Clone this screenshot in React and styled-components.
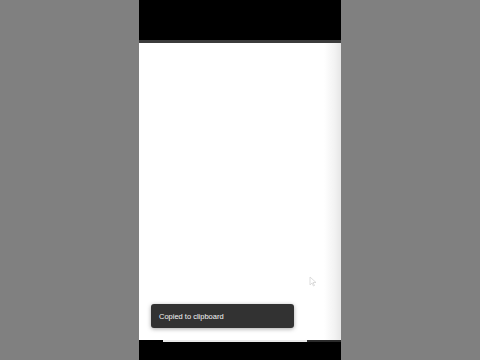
import React from "react";
import styled, { createGlobalStyle } from "styled-components";

const Global = createGlobalStyle`
  html, body { margin: 0; padding: 0; width: 480px; height: 360px; overflow: hidden; background: #808080; }
  * { box-sizing: border-box; }
`;

const Stage = styled.div`
  width: 480px;
  height: 360px;
  display: flex;
  justify-content: flex-start;
  background: #808080;
  font-family: "Liberation Sans", Arial, sans-serif;
`;

const Side = styled.div`
  width: ${(p) => p.$w}px;
  height: 100%;
  background: #808080;
  flex: none;
`;

const Phone = styled.div`
  width: 202px;
  height: 100%;
  display: flex;
  flex-direction: column;
  background: #000;
  position: relative;
  flex: none;
`;

const TopBlack = styled.div`
  height: 40px;
  background: #000;
  flex: none;
`;

const TopLine = styled.div`
  height: 3px;
  background: #3c3c3c;
  flex: none;
`;

const Screen = styled.div`
  flex: 1;
  background: linear-gradient(to right, #ffffff 0, #ffffff 185px, #f2f2f2 196px, #e6e6e6 202px);
  position: relative;
`;

const Bottom = styled.div`
  height: 20px;
  background: #000;
  display: flex;
  flex: none;
`;

const BottomBar = styled.div`
  height: 2px;
  margin-left: 24px;
  width: 144px;
  background: #e8e8e8;
`;

const BottomBarDark = styled.div`
  height: 2px;
  width: 34px;
  background: #2a2a2a;
`;

const Toast = styled.div`
  position: absolute;
  left: 12px;
  top: 304px;
  width: 143px;
  height: 24px;
  background: #323232;
  border-radius: 3px;
  box-shadow: 0 1px 4px rgba(0, 0, 0, 0.35);
  color: #f4f4f4;
  font-size: 7.5px;
  display: flex;
  align-items: center;
  padding-left: 8px;
`;

const Cursor = styled.svg`
  position: absolute;
  left: 170px;
  top: 233px;
  opacity: 0.35;
`;

export default function App() {
  return (
    <>
      <Global />
      <Stage>
        <Side $w={139} />
        <Phone>
          <TopBlack />
          <TopLine />
          <Screen>
            <Cursor width="8" height="11" viewBox="0 0 8 11">
              <path d="M1 1 L1 9 L3 7 L4.5 10 L5.5 9.5 L4 6.5 L7 6.5 Z" fill="#fff" stroke="#888" strokeWidth="0.8" />
            </Cursor>
          </Screen>
          <Bottom>
            <BottomBar />
            <BottomBarDark />
          </Bottom>
          <Toast>Copied to clipboard</Toast>
        </Phone>
        <Side $w={139} />
      </Stage>
    </>
  );
}
